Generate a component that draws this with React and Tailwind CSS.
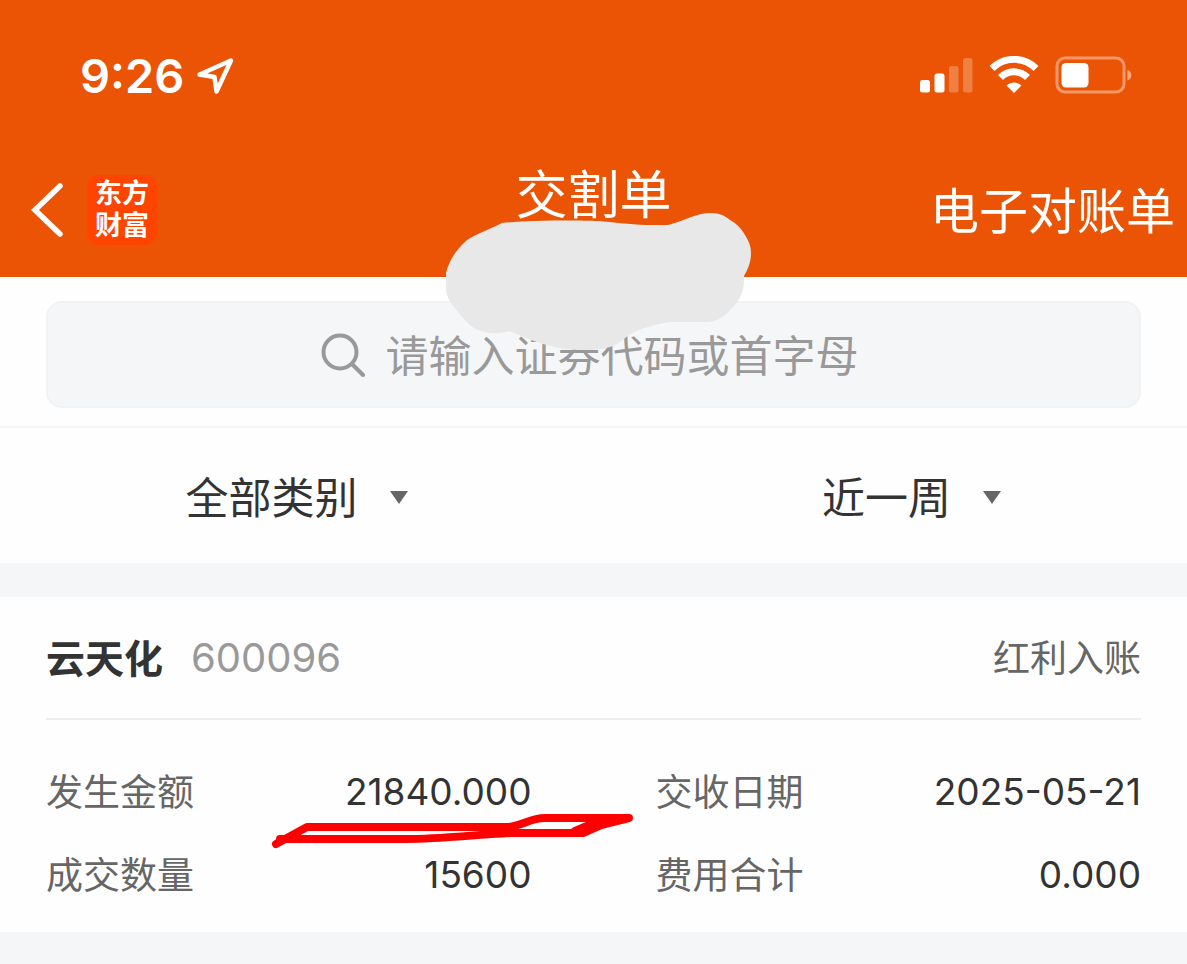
import { useState } from "react";

const CATEGORIES = ["全部类别", "证券买入", "证券卖出", "红利入账"];
const PERIODS = ["近一周", "近一月", "近三月"];

const record = {
  name: "云天化",
  code: "600096",
  type: "红利入账",
  fields: [
    { label: "发生金额", value: "21840.000", marked: true },
    { label: "交收日期", value: "2025-05-21" },
    { label: "成交数量", value: "15600" },
    { label: "费用合计", value: "0.000" },
  ],
};

export default function App() {
  const [keyword, setKeyword] = useState("");
  const [category, setCategory] = useState(CATEGORIES[0]);
  const [period, setPeriod] = useState(PERIODS[0]);

  return (
    <div className="min-h-screen bg-[#f5f6f8] font-['Noto_Sans_CJK_SC',sans-serif] text-[#333333]">
      <header className="relative bg-[#ea5404] text-white">
        <StatusBar />
        <NavBar />
        <Redaction />
      </header>

      <main>
        <div className="border-b-2 border-[#f5f5f6] bg-[#fefefe] px-[46px] pt-6 pb-[18px]">
          <label className="flex h-[107px] items-center justify-center gap-5 rounded-2xl border-2 border-[#f1f2f4] bg-[#f5f6f8] text-[#999999]">
            <SearchIcon />
            <input
              type="text"
              aria-label="搜索证券"
              className="field-sizing-content pr-2 pb-1 text-[43px] leading-[60px] placeholder:text-[#999999] focus:outline-none"
              placeholder="请输入证券代码或首字母"
              value={keyword}
              onChange={(e) => setKeyword(e.target.value)}
            />
          </label>
        </div>

        <div className="grid h-[135px] grid-cols-2 bg-[#fefefe]">
          <Filter label="类别" options={CATEGORIES} value={category} onChange={setCategory} />
          <Filter label="时间" options={PERIODS} value={period} onChange={setPeriod} />
        </div>

        <RecordCard record={record} />
      </main>
    </div>
  );
}

function StatusBar() {
  return (
    <div className="flex h-[143px] items-center justify-between pt-2 pr-[54px] pl-20">
      <div className="flex items-center gap-3">
        <span className="font-['Inter',sans-serif] text-[47px] leading-[60px] font-semibold">9:26</span>
        <svg width="38" height="38" viewBox="0 0 38 38" fill="none" stroke="currentColor" strokeWidth="4.5" strokeLinejoin="round">
          <path d="M35 3.500 L3.500 17.500 L18.500 20 L20.500 34.500 Z" />
        </svg>
      </div>
      <svg width="213" height="40" viewBox="0 0 213 40" fill="currentColor">
        <rect x="0" y="24" width="10" height="12.500" rx="2.5" />
        <rect x="14.500" y="17.500" width="10" height="19" rx="2.5" />
        <rect x="29" y="10" width="9.500" height="26.500" rx="2.5" opacity="0.25" />
        <rect x="43" y="2" width="9.500" height="34.500" rx="2.5" opacity="0.25" />
        <g fill="none" stroke="currentColor" strokeWidth="7">
          <path d="M72 12.500 A31 31 0 0 1 116 12.500" />
          <path d="M80.500 21.500 A19 19 0 0 1 107.500 21.500" />
        </g>
        <path d="M94 37 L86.500 29.500 A11 11 0 0 1 101.500 29.500 Z" />
        <rect x="137" y="2" width="67" height="34" rx="8" fill="none" stroke="currentColor" strokeWidth="3" opacity="0.4" />
        <rect x="141.500" y="7" width="27" height="24.500" rx="4.5" />
        <path d="M207.500 14 A5.500 5.500 0 0 1 207.500 24.500 Z" opacity="0.5" />
      </svg>
    </div>
  );
}

function NavBar() {
  return (
    <nav className="grid h-[134px] grid-cols-[1fr_auto_1fr] items-center px-3">
      <div className="flex items-center gap-6 pl-[18px]">
        <button type="button" aria-label="返回">
          <svg width="33" height="56" viewBox="0 0 33 56" fill="none" stroke="currentColor" strokeWidth="5.5" strokeLinecap="round">
            <path d="M30 4 L5 28 L30 52" />
          </svg>
        </button>
        <div className="flex size-[70px] flex-col items-center justify-center rounded-xl bg-[#ff4400] font-['Liberation_Sans','Noto_Sans_CJK_SC',sans-serif] text-[27px] leading-[32px] font-bold">
          <span>东方</span>
          <span>财富</span>
        </div>
      </div>
      <h1 className="pb-9 text-[52px] leading-[60px] font-normal">交割单</h1>
      <button type="button" className="justify-self-end pb-1 text-[49px] leading-[60px]">
        电子对账单
      </button>
    </nav>
  );
}

// grey blob over the account number
function Redaction() {
  return (
    <svg className="absolute top-[213px] left-1/2 z-10 -ml-[148px]" width="306" height="138" viewBox="0 0 306 138" fill="#e8e8e8" aria-hidden="true">
      <path d="M0 60 C3 48 9 38 21 27 C32 20 44 16 56 10 C84 7 130 7 153 8 C174 10 190 12 206 12 L222 12 C238 8 250 0 265 0 C274 0 279 3 284 7 C291 11 295 15 299 22 C303 28 305 34 305 40 C305 49 302 56 298 63 V70 C297 81 292 90 284 97 C277 105 269 109 261 109 H224 C210 111 200 114 188 119 C180 123 174 131 164 134 C154 137 144 137 134 137 C126 137 120 136 114 135 C98 132 83 127 64 118 C48 122 38 120 28 115 C20 110 15 102 9 95 C3 88 0 82 0 74 Z" />
    </svg>
  );
}

function SearchIcon() {
  return (
    <svg width="45" height="45" viewBox="0 0 45 45" fill="none" stroke="currentColor" strokeWidth="4" strokeLinecap="round" className="shrink-0">
      <circle cx="19" cy="20" r="16.5" />
      <path d="M31 32 L42 43" />
    </svg>
  );
}

function Filter({ label, options, value, onChange }) {
  return (
    <label className="flex items-center justify-end gap-8 pt-1 pr-[186px]">
      <select
        aria-label={label}
        className="field-sizing-content appearance-none bg-transparent pb-1.5 text-[43px] leading-[60px] focus:outline-none"
        value={value}
        onChange={(e) => onChange(e.target.value)}
      >
        {options.map((o) => (
          <option key={o}>{o}</option>
        ))}
      </select>
      <svg width="18" height="13" viewBox="0 0 18 13" fill="#666666">
        <path d="M0 0 H18 L9 13 Z" />
      </svg>
    </label>
  );
}

function RecordCard({ record: r }) {
  return (
    <section className="mt-[34px] bg-[#fefefe] px-[46px] pb-4">
      <div className="flex h-[123px] items-center justify-between border-b-2 border-[#eeeeee]">
        <div className="flex items-center gap-7">
          <h2 className="pb-1 text-[39px] leading-[60px] font-bold">{r.name}</h2>
          <span className="font-['Inter',sans-serif] text-[40px] leading-[60px] text-[#999999]">{r.code}</span>
        </div>
        <span className="pb-1 text-[37px] leading-[60px] text-[#666666]">{r.type}</span>
      </div>
      <dl className="grid grid-cols-2 gap-x-[124px] pt-[30px]">
        {r.fields.map((f) => (
          <div key={f.label} className="flex h-[83px] items-center justify-between text-[37px] leading-[60px]">
            <dt className="pb-1 text-[#666666]">{f.label}</dt>
            <dd className="relative font-['Inter',sans-serif]">
              {f.value}
              {f.marked && <Scribble />}
            </dd>
          </div>
        ))}
      </dl>
    </section>
  );
}

// hand-drawn red underline
function Scribble() {
  return (
    <svg className="absolute top-[51px] -right-[101px] z-10" width="362" height="36" viewBox="0 0 362 36" fill="none" stroke="#ff0000" strokeWidth="8" strokeLinecap="round" strokeLinejoin="round" aria-hidden="true">
      <path d="M5 31 L36 14 H236 C252 13 258 5 274 5 H358 L330 12 L312 20 H240 C200 22 170 26 135 26 H9" />
      <path d="M304 18 L330 7" />
    </svg>
  );
}
